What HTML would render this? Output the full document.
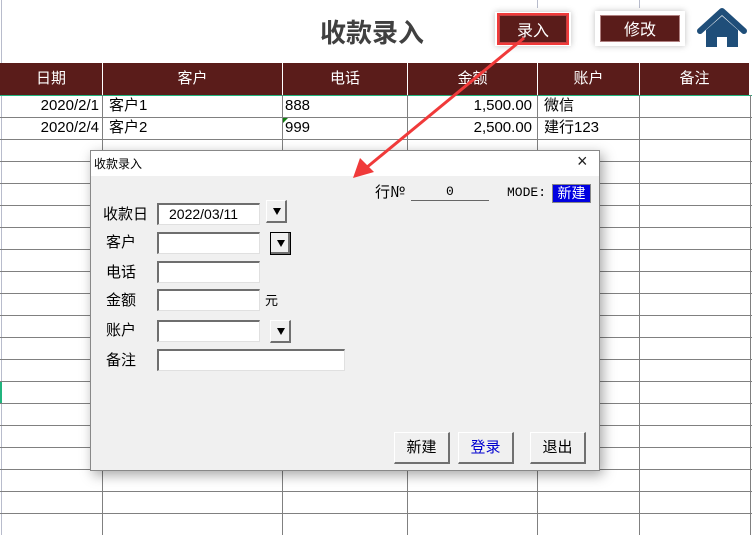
<!DOCTYPE html>
<html><head><meta charset="utf-8"><style>
*{margin:0;padding:0;box-sizing:border-box}
body{width:752px;height:535px;position:relative;overflow:hidden;background:#fff;font-family:"Liberation Sans","Noto Sans CJK SC",sans-serif}
.a{position:absolute}
.hl{position:absolute;left:0;width:752px;height:1px;background:#808080}
.vl{position:absolute;width:1px;background:#808080}
.hd{position:absolute;top:63px;height:32px;background:#5a1c1a;color:#fff;font-size:15px;text-align:center;line-height:32px;border-right:1px solid #fff}
.c{position:absolute;font-size:15px;color:#000;line-height:22px}
.lbl{position:absolute;font-size:15px;color:#000;font-family:"Noto Sans CJK SC",sans-serif}
.inp{position:absolute;background:#fff;border-top:2px solid #6e6e6e;border-left:2px solid #6e6e6e;border-right:1px solid #e0e0e0;border-bottom:1px solid #e0e0e0}
.dd{position:absolute;width:21px;height:23px;background:#f0f0f0;border-top:1px solid #fff;border-left:1px solid #fff;border-right:2px solid #707070;border-bottom:2px solid #707070}
.dd:after{content:"";position:absolute;left:6px;top:7px;border-left:4px solid transparent;border-right:4px solid transparent;border-top:7px solid #000}
.btn{position:absolute;width:56px;height:32px;background:#f0f0f0;border-top:1px solid #fff;border-left:1px solid #fff;border-right:2px solid #707070;border-bottom:2px solid #707070;font-size:15px;text-align:center;line-height:28px;font-family:"Noto Sans CJK SC",sans-serif}
</style></head><body>
<div class="a" style="left:1px;top:0;width:1px;height:535px;background:#b8bccc"></div>
<div class="vl" style="left:537px;top:0;height:8px;background:#b8bccc"></div>
<div class="vl" style="left:639px;top:0;height:8px;background:#b8bccc"></div>
<div class="a" style="left:320px;top:14px;font-size:26px;font-weight:bold;color:#404040;font-family:'Noto Sans CJK SC',sans-serif;line-height:36px">收款录入</div>
<div class="a" style="left:495px;top:12px;width:76px;height:34px;box-shadow:0 0 6px rgba(0,0,0,.25);background:#fff"></div>
<div class="a" style="left:499px;top:15px;width:68px;height:28px;background:#5a1c1a;border:1px solid #c04040;outline:2px solid #f03a3a;color:#fff;font-size:16px;text-align:center;line-height:26px;font-family:'Noto Sans CJK SC',sans-serif">录入</div>
<div class="a" style="left:595px;top:11px;width:90px;height:35px;box-shadow:0 0 6px rgba(0,0,0,.25);background:#fff"></div>
<div class="a" style="left:600px;top:15px;width:80px;height:27px;background:#5a1c1a;border:1px solid #b08080;color:#fff;font-size:16px;text-align:center;line-height:25px;font-family:'Noto Sans CJK SC',sans-serif">修改</div>
<svg class="a" style="left:695px;top:5px" width="54" height="45" viewBox="695 5 54 45"><path d="M700 31 L722 11 L744 31" fill="none" stroke="#1f4e79" stroke-width="6" stroke-linecap="round" stroke-linejoin="round"/><path d="M706 30 L722 16 L738 30 L738 47 L727 47 L727 37 L717 37 L717 47 L706 47 Z" fill="#1f4e79"/></svg>

<div class="hd" style="left:0;width:103px">日期</div>
<div class="hd" style="left:103px;width:180px">客户</div>
<div class="hd" style="left:283px;width:125px">电话</div>
<div class="hd" style="left:408px;width:130px">金额</div>
<div class="hd" style="left:538px;width:102px">账户</div>
<div class="hd" style="left:640px;width:110px">备注</div>
<div class="a" style="left:0;top:95px;width:752px;height:1px;background:#21b47e"></div>
<div class="a" style="left:0;top:381px;width:2px;height:22px;background:#21b47e"></div>
<div id="g"></div>
<script>
var s='';for(var y=117;y<=513;y+=22)s+='<div class="hl" style="top:'+y+'px"></div>';
[102,282,407,537,639,750].forEach(function(x){s+='<div class="vl" style="left:'+x+'px;top:95px;height:440px"></div>'});
document.getElementById('g').innerHTML=s;
</script>
<div class="c" style="left:0;width:99px;text-align:right;top:95px">2020/2/1</div>
<div class="c" style="left:0;width:99px;text-align:right;top:117px">2020/2/4</div>
<div class="c" style="left:109px;top:95px">客户1</div>
<div class="c" style="left:109px;top:117px">客户2</div>
<div class="c" style="left:285px;top:95px">888</div>
<div class="c" style="left:285px;top:117px">999</div>
<div class="a" style="left:283px;top:118px;border-top:5px solid #107c10;border-right:5px solid transparent"></div>
<div class="c" style="left:408px;width:124px;text-align:right;top:95px">1,500.00</div>
<div class="c" style="left:408px;width:124px;text-align:right;top:117px">2,500.00</div>
<div class="c" style="left:544px;top:95px">微信</div>
<div class="c" style="left:544px;top:117px">建行123</div>

<div class="a" style="left:90px;top:150px;width:510px;height:321px;background:#f0f0f0;border:1px solid #888;box-shadow:3px 4px 12px rgba(0,0,0,.35)">
 <div class="a" style="left:0;top:0;width:508px;height:25px;background:#fff"></div>
 <div class="a" style="left:3px;top:4px;font-size:12px;font-family:'Noto Sans CJK SC',sans-serif">收款录入</div>
 <div class="a" style="left:486px;top:0px;font-size:18px;color:#222">×</div>
</div>
<div class="lbl" style="left:375px;top:181px">行№</div>
<div class="a" style="left:411px;top:200px;width:78px;height:1px;background:#666"></div>
<div class="a" style="left:446px;top:184px;font-size:13px;font-family:'Liberation Mono',monospace">0</div>
<div class="a" style="left:507px;top:185px;font-size:13px;font-family:'Liberation Mono',monospace">MODE:</div>
<div class="a" style="left:552px;top:184px;width:39px;height:19px;background:#0000e0;border:1px solid #888;color:#fff;font-size:14px;text-align:center;line-height:17px;font-family:'Noto Sans CJK SC',sans-serif">新建</div>

<div class="lbl" style="left:103px;top:203px">收款日</div>
<div class="lbl" style="left:106px;top:231px">客户</div>
<div class="lbl" style="left:106px;top:261px">电话</div>
<div class="lbl" style="left:106px;top:289px">金额</div>
<div class="lbl" style="left:106px;top:319px">账户</div>
<div class="lbl" style="left:106px;top:349px">备注</div>
<div class="inp" style="left:157px;top:203px;width:103px;height:22px;font-size:14px;line-height:18px;padding-left:10px">2022/03/11</div>
<div class="inp" style="left:157px;top:232px;width:103px;height:22px"></div>
<div class="inp" style="left:157px;top:261px;width:103px;height:22px"></div>
<div class="inp" style="left:157px;top:289px;width:103px;height:22px"></div>
<div class="inp" style="left:157px;top:320px;width:103px;height:22px"></div>
<div class="inp" style="left:157px;top:349px;width:188px;height:22px"></div>
<div class="lbl" style="left:265px;top:290px;font-size:13px">元</div>
<div class="dd" style="left:266px;top:200px"></div>
<div class="dd" style="left:270px;top:232px;border:1px solid #000;box-shadow:inset -2px -2px 0 #707070"></div>
<div class="dd" style="left:270px;top:320px"></div>
<div class="btn" style="left:394px;top:432px">新建</div>
<div class="btn" style="left:458px;top:432px;color:#0000d0">登录</div>
<div class="btn" style="left:530px;top:432px">退出</div>

<svg class="a" style="left:0;top:0" width="752" height="535"><line x1="524" y1="38" x2="366" y2="168" stroke="#f03a3a" stroke-width="3"/><path d="M353 178 L360 158 L374 172 Z" fill="#f03a3a"/></svg>
</body></html>
